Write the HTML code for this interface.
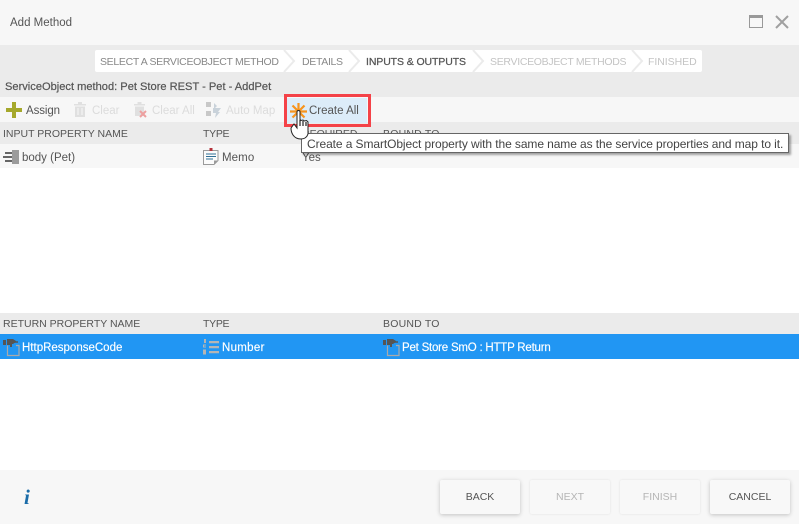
<!DOCTYPE html>
<html><head><meta charset="utf-8"><style>
html,body{margin:0;padding:0}
body{width:799px;height:524px;position:relative;overflow:hidden;background:#fff;font-family:"Liberation Sans",sans-serif;font-size:11.5px;color:#555}
.b{position:absolute}
.t{position:absolute;white-space:nowrap;line-height:14px}
.s{font-size:10.5px;letter-spacing:-.32px;top:55px}
.h{font-size:10.5px}
svg{position:absolute;overflow:visible}
.btn{position:absolute;top:480px;width:80px;height:34px;background:#f8f8f8;border-radius:2px;box-shadow:0 1px 4px rgba(0,0,0,.22);text-align:center;line-height:35px;font-size:10.5px;color:#555}
.dis{box-shadow:0 0 2px rgba(0,0,0,.1);color:#b5b5b5}
.dim{color:#dcdcdc}
</style></head><body>
<div class="b" style="left:0;top:0;width:799px;height:45px;background:#f7f7f7"></div>
<div class="b" style="left:0;top:45px;width:799px;height:52px;background:#ebebeb"></div>
<div class="b" style="left:0;top:97px;width:799px;height:25px;background:#f7f7f7"></div>
<div class="b" style="left:0;top:122px;width:799px;height:22px;background:#ebebeb"></div>
<div class="b" style="left:0;top:144px;width:799px;height:24px;background:#f7f7f7"></div>
<div class="b" style="left:0;top:313px;width:799px;height:21px;background:#ebebeb"></div>
<div class="b" style="left:0;top:334px;width:799px;height:25px;background:#2196f3"></div>
<div class="b" style="left:0;top:470px;width:799px;height:54px;background:#f7f7f7"></div>

<div class="t" style="left:10px;top:16px;font-size:11.5px;color:#555">Add Method</div>
<svg style="left:749px;top:15px" width="18" height="14"><rect x=".5" y=".5" width="13" height="12" fill="none" stroke="#999"/><rect x="0" y="0" width="14" height="3" fill="#999"/></svg>
<svg style="left:775px;top:15px" width="14" height="14"><path d="M1 1L13 13M13 1L1 13" stroke="#a0a0a0" stroke-width="2" fill="none"/></svg>

<div class="b" style="left:95px;top:50px;width:607px;height:22px;background:#fff;border-radius:2px"></div>
<svg style="left:95px;top:50px" width="607" height="22"><path d="M189 0L199 11L189 22M254 0L264 11L254 22M378 0L388 11L378 22M537 0L547 11L537 22" fill="none" stroke="#ebebeb" stroke-width="2"/></svg>
<div class="t s" style="left:100px;color:#888">SELECT A SERVICEOBJECT METHOD</div>
<div class="t s" style="left:302px;color:#888">DETAILS</div>
<div class="t s" style="left:366px;color:#555;-webkit-text-stroke:.25px #555;letter-spacing:-.1px">INPUTS &amp; OUTPUTS</div>
<div class="t s" style="left:490px;color:#c4c4c4;letter-spacing:-.3px">SERVICEOBJECT METHODS</div>
<div class="t s" style="left:648px;color:#c4c4c4;letter-spacing:-.05px">FINISHED</div>

<div class="t" style="left:5px;top:80px;font-size:11.1px;color:#555;-webkit-text-stroke:.2px #555">ServiceObject method: Pet Store REST - Pet - AddPet</div>

<svg style="left:6px;top:102px" width="16" height="16"><path d="M6 0h4v6h6v4h-6v6H6v-6H0V6h6z" fill="#a5a82c"/></svg>
<div class="t" style="left:26px;top:104px;letter-spacing:-.1px">Assign</div>
<svg style="left:74px;top:102px" width="12" height="15"><path d="M0 2h12v1.500H0zM4 0h4v2H4zM1 4.500h10V15H1zM3.500 6v7h1V6zM7.500 6v7h1V6z" fill="#e0e0e0" fill-rule="evenodd"/></svg>
<div class="t dim" style="left:92px;top:104px">Clear</div>
<svg style="left:134px;top:102px" width="16" height="16"><path d="M0 2h11v1.500H0zM3.500 0h4v2h-4zM1 4.500h9V14H1z" fill="#e0e0e0"/><path d="M6 9l6 6M12 9l-6 6" stroke="#eda0a0" stroke-width="2"/></svg>
<div class="t dim" style="left:152px;top:104px">Clear All</div>
<svg style="left:206px;top:102px" width="16" height="16"><path d="M0 0h5v5H0zM0 9h5v5H0z" fill="#c8c8c8"/><path d="M8 1l3 3-3 3zM7 6h8l-3 4h2l-5 6 1-5H7z" fill="#c9d2da"/></svg>
<div class="t dim" style="left:226px;top:104px">Auto Map</div>

<div class="b" style="left:287px;top:98px;width:80px;height:25px;background:#dcecf9"></div>
<div class="t" style="left:309px;top:104px;color:#555">Create All</div>
<div class="b" style="left:284px;top:94px;width:87px;height:33px;border:3.500px solid #f44248;box-sizing:border-box"></div>
<svg style="left:290px;top:103px" width="17" height="17"><path d="M8.500 0v17M0 8.500h17M2.500 2.500l12 12M14.500 2.500l-12 12" stroke="#f7941d" stroke-width="2.200"/></svg>

<div class="t h" style="left:3px;top:127px">INPUT PROPERTY NAME</div>
<div class="t h" style="left:203px;top:127px;letter-spacing:-.3px">TYPE</div>
<div class="t h" style="left:302px;top:127px">REQUIRED</div>
<div class="t h" style="left:383px;top:127px;letter-spacing:.2px">BOUND TO</div>

<svg style="left:3px;top:150px" width="17" height="15"><path d="M2 2h7v2H2zM0 6h9v2H0zM2 10h7v2H2z" fill="#666"/><rect x="9" y="0" width="7" height="14" fill="#9b9b9b"/></svg>
<div class="t" style="left:22px;top:151px">body (Pet)</div>
<svg style="left:203px;top:148px" width="16" height="17"><path d="M.5 2.500h14.500v10l-4 4H.5z" fill="#fbfbfb" stroke="#9a9a9a"/><rect x="6.500" y="0" width="3" height="3" fill="#b5303a"/><path d="M3 6h10M3 8.500h10M3 11h7" stroke="#2f6f96" stroke-width="1"/><path d="M11 16.500v-4h4z" fill="#9a9a9a"/></svg>
<div class="t" style="left:222px;top:151px;letter-spacing:.1px">Memo</div>
<div class="t" style="left:302px;top:151px">Yes</div>

<div class="b" style="left:301px;top:133px;width:488px;height:20px;background:#fff;border:1px solid #666;box-sizing:border-box;box-shadow:2px 2px 2px rgba(0,0,0,.35)"></div>
<div class="t" style="left:307px;top:137px;font-size:12px;color:#444;letter-spacing:-.09px">Create a SmartObject property with the same name as the service properties and map to it.</div>

<svg style="left:290px;top:109px" width="18" height="30"><path d="M1 19C1 23 3 30 11 30c4 0 6-2 7-5V13l-1.500-1.500-2 .5-1.500-1-2 .5-1-1V3C10 1 7 1 7 3V19L4 15z" fill="#fff" stroke="#222" stroke-width="1"/><path d="M10 11v6M13 12v5M16 13v4" stroke="#222" stroke-width="1.200"/></svg>

<div class="t h" style="left:3px;top:317px">RETURN PROPERTY NAME</div>
<div class="t h" style="left:203px;top:317px;letter-spacing:-.3px">TYPE</div>
<div class="t h" style="left:383px;top:317px;letter-spacing:.2px">BOUND TO</div>

<svg style="left:3px;top:339px" width="16" height="17"><path d="M4.500 6.500V16.500h11.500V6.500H13" fill="none" stroke="#aaa" stroke-width="1.200"/><path d="M0 1h3v5H0zM4 0h6l3 2v1l-3 2-1 0v3H7V6H4z" fill="#555"/><path d="M11 3h4" stroke="#555" stroke-width="1.500"/></svg>
<div class="t" style="left:22px;top:341px;color:#fff;-webkit-text-stroke:.15px #fff">HttpResponseCode</div>
<svg style="left:203px;top:339px" width="16" height="16"><path d="M6 2h10v2.300H6zM6 7h10v2.300H6zM6 12h10v2.300H6z" fill="#b5b5b5"/><path d="M1 0h2v4H1zM0 5.500h3v1H1v1h2v1H0zM0 10.500h3v5H0z" fill="#b5b5b5"/></svg>
<div class="t" style="left:222px;top:341px;color:#fff;-webkit-text-stroke:.15px #fff;letter-spacing:.3px">Number</div>
<svg style="left:383px;top:339px" width="16" height="17"><path d="M4.500 6.500V16.500h11.500V6.500H13" fill="none" stroke="#aaa" stroke-width="1.200"/><path d="M0 1h3v5H0zM4 0h6l3 2v1l-3 2-1 0v3H7V6H4z" fill="#555"/><path d="M11 3h4" stroke="#555" stroke-width="1.500"/></svg>
<div class="t" style="left:402px;top:341px;color:#fff;-webkit-text-stroke:.15px #fff;letter-spacing:-.22px">Pet Store SmO : HTTP Return</div>

<div class="t" style="left:24px;top:487px;font-family:'Liberation Serif',serif;font-weight:bold;font-style:italic;font-size:21px;line-height:20px;color:#1b6ca8">i</div>
<div class="btn" style="left:440px">BACK</div>
<div class="btn dis" style="left:530px">NEXT</div>
<div class="btn dis" style="left:620px">FINISH</div>
<div class="btn" style="left:710px">CANCEL</div>
</body></html>
